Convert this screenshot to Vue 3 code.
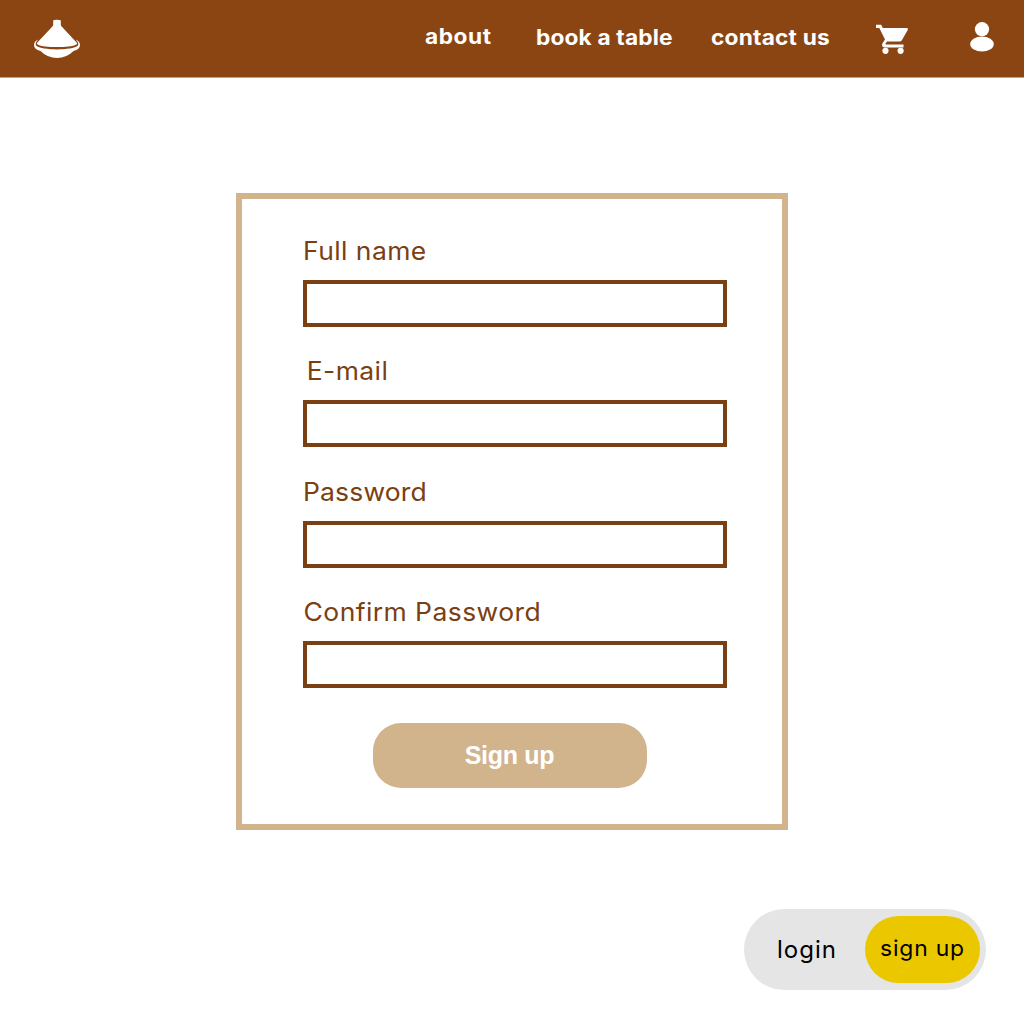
<script setup>
const links = [
  { id: 'about', text: 'about' },
  { id: 'book', text: 'book a table' },
  { id: 'contact', text: 'contact us' },
]
const fields = [
  { id: 'name', label: 'Full name', type: 'text' },
  { id: 'email', label: 'E-mail', type: 'email' },
  { id: 'password', label: 'Password', type: 'password' },
  { id: 'confirm', label: 'Confirm Password', type: 'password' },
]
</script>

<template>
  <div class="page">
    <header class="bar">
      <svg class="logo" viewBox="0 0 48 40" width="48" height="40">
        <path fill="#fff" d="M20.200 4.200V1.800Q20.400 .7 24 .7T27.800 1.800V4.200Q27.600 6 28.200 7L43.800 23.700Q44.800 24.700 43.300 25.400C37 29 11 29 4.700 25.400Q3.200 24.700 4.200 23.700L19.800 7Q20.400 6 20.200 4.200Z" />
        <path fill="#fff" d="M5.500 20.500Q1 22.300 1 26Q1 30.300 7.500 32Q14.500 39 24 39T40.500 32Q47 30.300 47 26Q47 22.300 42.500 20.500Q46.200 23.500 45 26.600C39 31.800 9 31.800 3 26.600Q1.800 23.500 5.500 20.500Z" />
      </svg>
      <nav class="links">
        <a v-for="l in links" :key="l.id" :class="['link', l.id]">{{ l.text }}</a>
      </nav>
      <svg class="cart" viewBox="0 0 34 31" width="34" height="31">
        <path fill="#fff" d="M1 .8H6.200L7.800 4H31.500Q33.600 4.200 32.700 6L27 16Q26.200 17.500 24.500 17.500H12L10.500 19.600Q10.300 20.400 11 20.400H28.500V23.400H9.500Q6 23 7.500 19.300L10 15.600L4.300 4H1Z" />
        <circle cx="10.500" cy="26.800" r="3.100" fill="#fff" />
        <circle cx="25.600" cy="26.800" r="3.100" fill="#fff" />
      </svg>
      <svg class="user" viewBox="0 0 24 30" width="24" height="30">
        <circle cx="12" cy="7.200" r="7.100" fill="#fff" />
        <ellipse cx="12" cy="22" rx="11.800" ry="7.500" fill="#fff" />
      </svg>
    </header>

    <form class="panel" @submit.prevent>
      <div v-for="f in fields" :key="f.id" class="field">
        <label :for="f.id" :class="['label', f.id]">{{ f.label }}</label>
        <input :id="f.id" class="input" :type="f.type" />
      </div>
      <button class="submit">Sign up</button>
    </form>

    <div class="toggle">
      <span class="login">login</span>
      <span class="signup"><span class="signup-text">sign up</span></span>
    </div>
  </div>
</template>

<style>
body { margin: 0; background: #fff; }
</style>

<style scoped>
.page {
  width: 1024px;
  height: 1024px;
  overflow: hidden;
  display: flex;
  flex-direction: column;
  background: #fff;
  font-family: Inter, "Liberation Sans", sans-serif;
}
.bar {
  box-sizing: border-box;
  height: 78px;
  flex: none;
  display: flex;
  align-items: flex-start;
  background: #8b4513;
  border-bottom: 1px solid #c5a289;
}
.logo { margin: 18.500px 0 0 33px; flex: none; }
.links {
  display: flex;
  margin-left: 344px;
  width: 450px;
  flex: none;
  color: #fff;
  font-size: 21px;
  font-weight: 700;
  line-height: 26px;
  white-space: nowrap;
}
.link { flex: none; transform: scaleX(1.08); transform-origin: left; }
.about { width: 111px; margin-top: 24px; letter-spacing: .5px; }
.book { width: 175px; margin-top: 25px; letter-spacing: .15px; }
.contact { margin-top: 25px; letter-spacing: .2px; }
.cart { margin: 24px 0 0; flex: none; }
.user { margin: 22px 0 0 61px; flex: none; }
.panel {
  box-sizing: border-box;
  width: 552px;
  height: 637px;
  flex: none;
  margin: 115.400px 0 0 236px;
  padding: 33.200px 55px 0 61px;
  border: 6px solid #d2b48c;
}
.field { height: 120.500px; }
.label {
  display: block;
  width: 240px;
  height: 47px;
  line-height: 37px;
  font-size: 25px;
  color: #7b3f14;
  font-weight: 400;
  letter-spacing: .4px;
  white-space: nowrap;
  transform: scaleX(1.06);
  transform-origin: left;
}
.label.email { padding-left: 3.500px; }
.label.password { letter-spacing: .15px; }
.label.confirm { padding-left: .5px; }
.input {
  display: block;
  box-sizing: border-box;
  width: 424px;
  height: 47px;
  margin: 0;
  border: 4px solid #7b3f14;
  border-radius: 0;
  background: #fff;
  outline: none;
}
.submit {
  display: block;
  width: 274px;
  height: 65px;
  margin: 8.200px 0 0 70px;
  padding: 0 1px 0 0;
  border: 0;
  border-radius: 28px;
  background: #d2b48c;
  color: #fff;
  font: bold 25px "Liberation Sans", Arial, sans-serif;
  letter-spacing: -.3px;
}
.toggle {
  box-sizing: border-box;
  display: flex;
  width: 242.500px;
  height: 80.500px;
  flex: none;
  margin: 79px 0 0 743.500px;
  padding: 6.500px 6.500px 0 33.500px;
  border-radius: 41px;
  background: #e5e5e5;
  color: #000;
  font-size: 24px;
  white-space: nowrap;
}
.login { width: 88px; flex: none; line-height: 67px; letter-spacing: 1px; }
.signup {
  box-sizing: border-box;
  width: 115px;
  height: 67px;
  flex: none;
  padding-left: 15px;
  border-radius: 33.500px;
  background: #ebc700;
  font-size: 22px;
  line-height: 65px;
  letter-spacing: .8px;
}
.signup-text { display: inline-block; transform: scaleX(1.04); transform-origin: left; }
</style>
